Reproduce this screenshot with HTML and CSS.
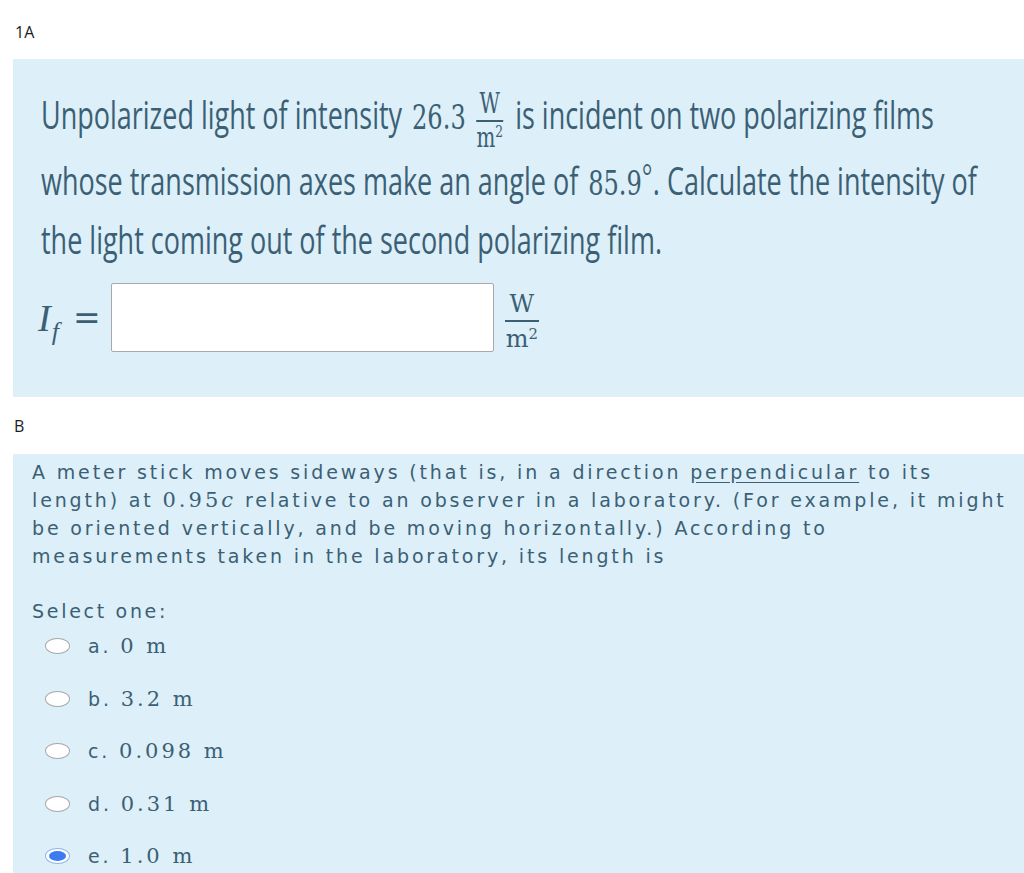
FILE: index.html
```html
<!DOCTYPE html>
<html lang="en">
<head>
<meta charset="utf-8">
<title>Physics questions</title>
<link rel="stylesheet" href="styles.css">
</head>
<body>
<div class="label label-1a">1A</div>
<section class="panel panel-a">
  <p class="qtext">Unpolarized light of intensity <span class="mnum">26.3</span><span class="frac frac-inline"><span class="frac-top">W</span><span class="frac-bot">m<sup>2</sup></span></span>is incident on two polarizing films<br>whose transmission axes make an angle of <span class="mnum">85.9<sup class="deg">°</sup></span>. Calculate the intensity of<br>the light coming out of the second polarizing film.</p>
  <div class="answer">
    <span class="var">I<sub>f</sub></span>
    <span class="eq">=</span>
    <input class="box" type="text" aria-label="I f">
    <span class="frac frac-unit"><span class="frac-top">W</span><span class="frac-bot">m<sup>2</sup></span></span>
  </div>
</section>
<div class="label label-b">B</div>
<section class="panel panel-b">
  <p class="q2">A meter stick moves sideways (that is, in a direction <u>perpendicular</u> to its<br>length) at <span class="m2">0.95<i>c</i></span> relative to an observer in a laboratory. (For example, it might<br>be oriented vertically, and be moving horizontally.) According to<br>measurements taken in the laboratory, its length is</p>
  <div class="select">Select one:</div>
  <ul class="opts">
    <li class="opt"><span class="radio"></span><span class="olab">a. <span class="m2">0 m</span></span></li>
    <li class="opt"><span class="radio"></span><span class="olab">b. <span class="m2">3.2 m</span></span></li>
    <li class="opt"><span class="radio"></span><span class="olab">c. <span class="m2">0.098 m</span></span></li>
    <li class="opt"><span class="radio"></span><span class="olab">d. <span class="m2">0.31 m</span></span></li>
    <li class="opt"><span class="radio radio-on"></span><span class="olab">e. <span class="m2">1.0 m</span></span></li>
  </ul>
</section>
</body>
</html>
```

FILE: styles.css
```css
* { box-sizing: border-box; }
html, body { margin: 0; padding: 0; background: #ffffff; }
body {
  width: 1024px;
  height: 873px;
  overflow: hidden;
  padding-top: 22px;
  font-family: "Open Sans", "Liberation Sans", sans-serif;
}

.label {
  font-size: 16px;
  line-height: 20px;
  margin-left: 15px;
  color: #1b1b1b;
}
.label-1a { margin-bottom: 17px; }
.label-b { margin: 19px 0 18px 14px; }

.panel {
  margin-left: 13px;
  background: #ddeff8;
  color: #3b5f75;
}

/* ---------- panel A ---------- */
.panel-a {
  height: 338px;
  padding: 27px 0 0 28px;
  overflow: hidden;
}
/* the question text is a horizontally condensed face: scale the line box */
.qtext {
  margin: 0;
  font-family: "Open Sans", sans-serif;
  font-size: 38px;
  line-height: 56px;
  white-space: nowrap;
  transform: scaleX(0.71);
  transform-origin: 0 0;
}
.mnum {
  font-family: "DejaVu Serif", serif;
  font-size: 34px;
  margin-left: 4px;
}
.deg {
  font-family: "Liberation Serif", serif;
  font-size: 36px;
  line-height: 0;
  vertical-align: 7px;
  margin-right: 1px;
}

.frac {
  display: inline-block;
  font-family: "DejaVu Serif", serif;
  text-align: center;
}
.frac-top {
  display: block;
  border-bottom: 2px solid currentColor;
}
.frac-bot { display: block; }
.frac sup {
  font-size: 0.62em;
  line-height: 0;
  vertical-align: 0.55em;
}
.frac-inline {
  font-size: 28px;
  vertical-align: -18px;
  margin: 0 17px 2px 15px;
}
.frac-inline .frac-top { line-height: 24px; padding: 0 1px 4px; }
.frac-inline .frac-bot { line-height: 24px; padding-top: 4px; }

.answer {
  display: flex;
  align-items: center;
  margin-top: 16px;
  margin-left: -3px;
}
.var {
  font-family: "Liberation Serif", serif;
  font-style: italic;
  font-size: 38px;
  line-height: 40px;
}
.var sub {
  font-size: 26px;
  line-height: 0;
  vertical-align: -9px;
  margin-left: 1px;
}
.eq {
  font-family: "DejaVu Serif", serif;
  font-size: 33px;
  line-height: 40px;
  margin: 0 10px 0 14px;
}
.box {
  width: 383px;
  height: 69px;
  margin: 0;
  border: 1px solid #a9a9a9;
  border-radius: 2px;
  background: #ffffff;
}
.frac-unit {
  font-size: 24px;
  margin: 10px 0 0 11px;
}
.frac-unit .frac-top { line-height: 22px; padding: 0 5px 5px; }
.frac-unit .frac-bot { line-height: 26px; padding-top: 4px; }

/* ---------- panel B ---------- */
.panel-b {
  height: 460px;
  padding: 4px 0 0 19px;
  font-family: "DejaVu Sans", "Verdana", sans-serif;
  font-size: 19px;
  line-height: 28px;
  letter-spacing: 2.85px;
}
.q2 {
  margin: 0;
  white-space: nowrap;
}
.q2 u { text-underline-offset: 3px; }
.m2 {
  font-family: "DejaVu Serif", serif;
  font-size: 21px;
  line-height: 1;
  letter-spacing: 3px;
}
.m2 i { font-style: italic; }
.select {
  margin-top: 27px;
  letter-spacing: 2.7px;
}
.opts {
  list-style: none;
  margin: 7px 0 0 0;
  padding: 0;
}
.opt {
  display: flex;
  align-items: center;
  height: 28px;
  margin-bottom: 24.5px;
}
.radio {
  position: relative;
  flex: none;
  width: 25px;
  height: 16px;
  margin: 0 18px 0 13px;
  border: 1px solid #a6a6a6;
  border-radius: 50%;
  background: #ffffff;
}
.radio-on { border-color: #8fb3ef; }
.radio-on::after {
  content: "";
  position: absolute;
  left: 3px;
  top: 2px;
  right: 3px;
  bottom: 2px;
  border-radius: 50%;
  background: #3b7cf0;
}
.olab { white-space: nowrap; }
```
